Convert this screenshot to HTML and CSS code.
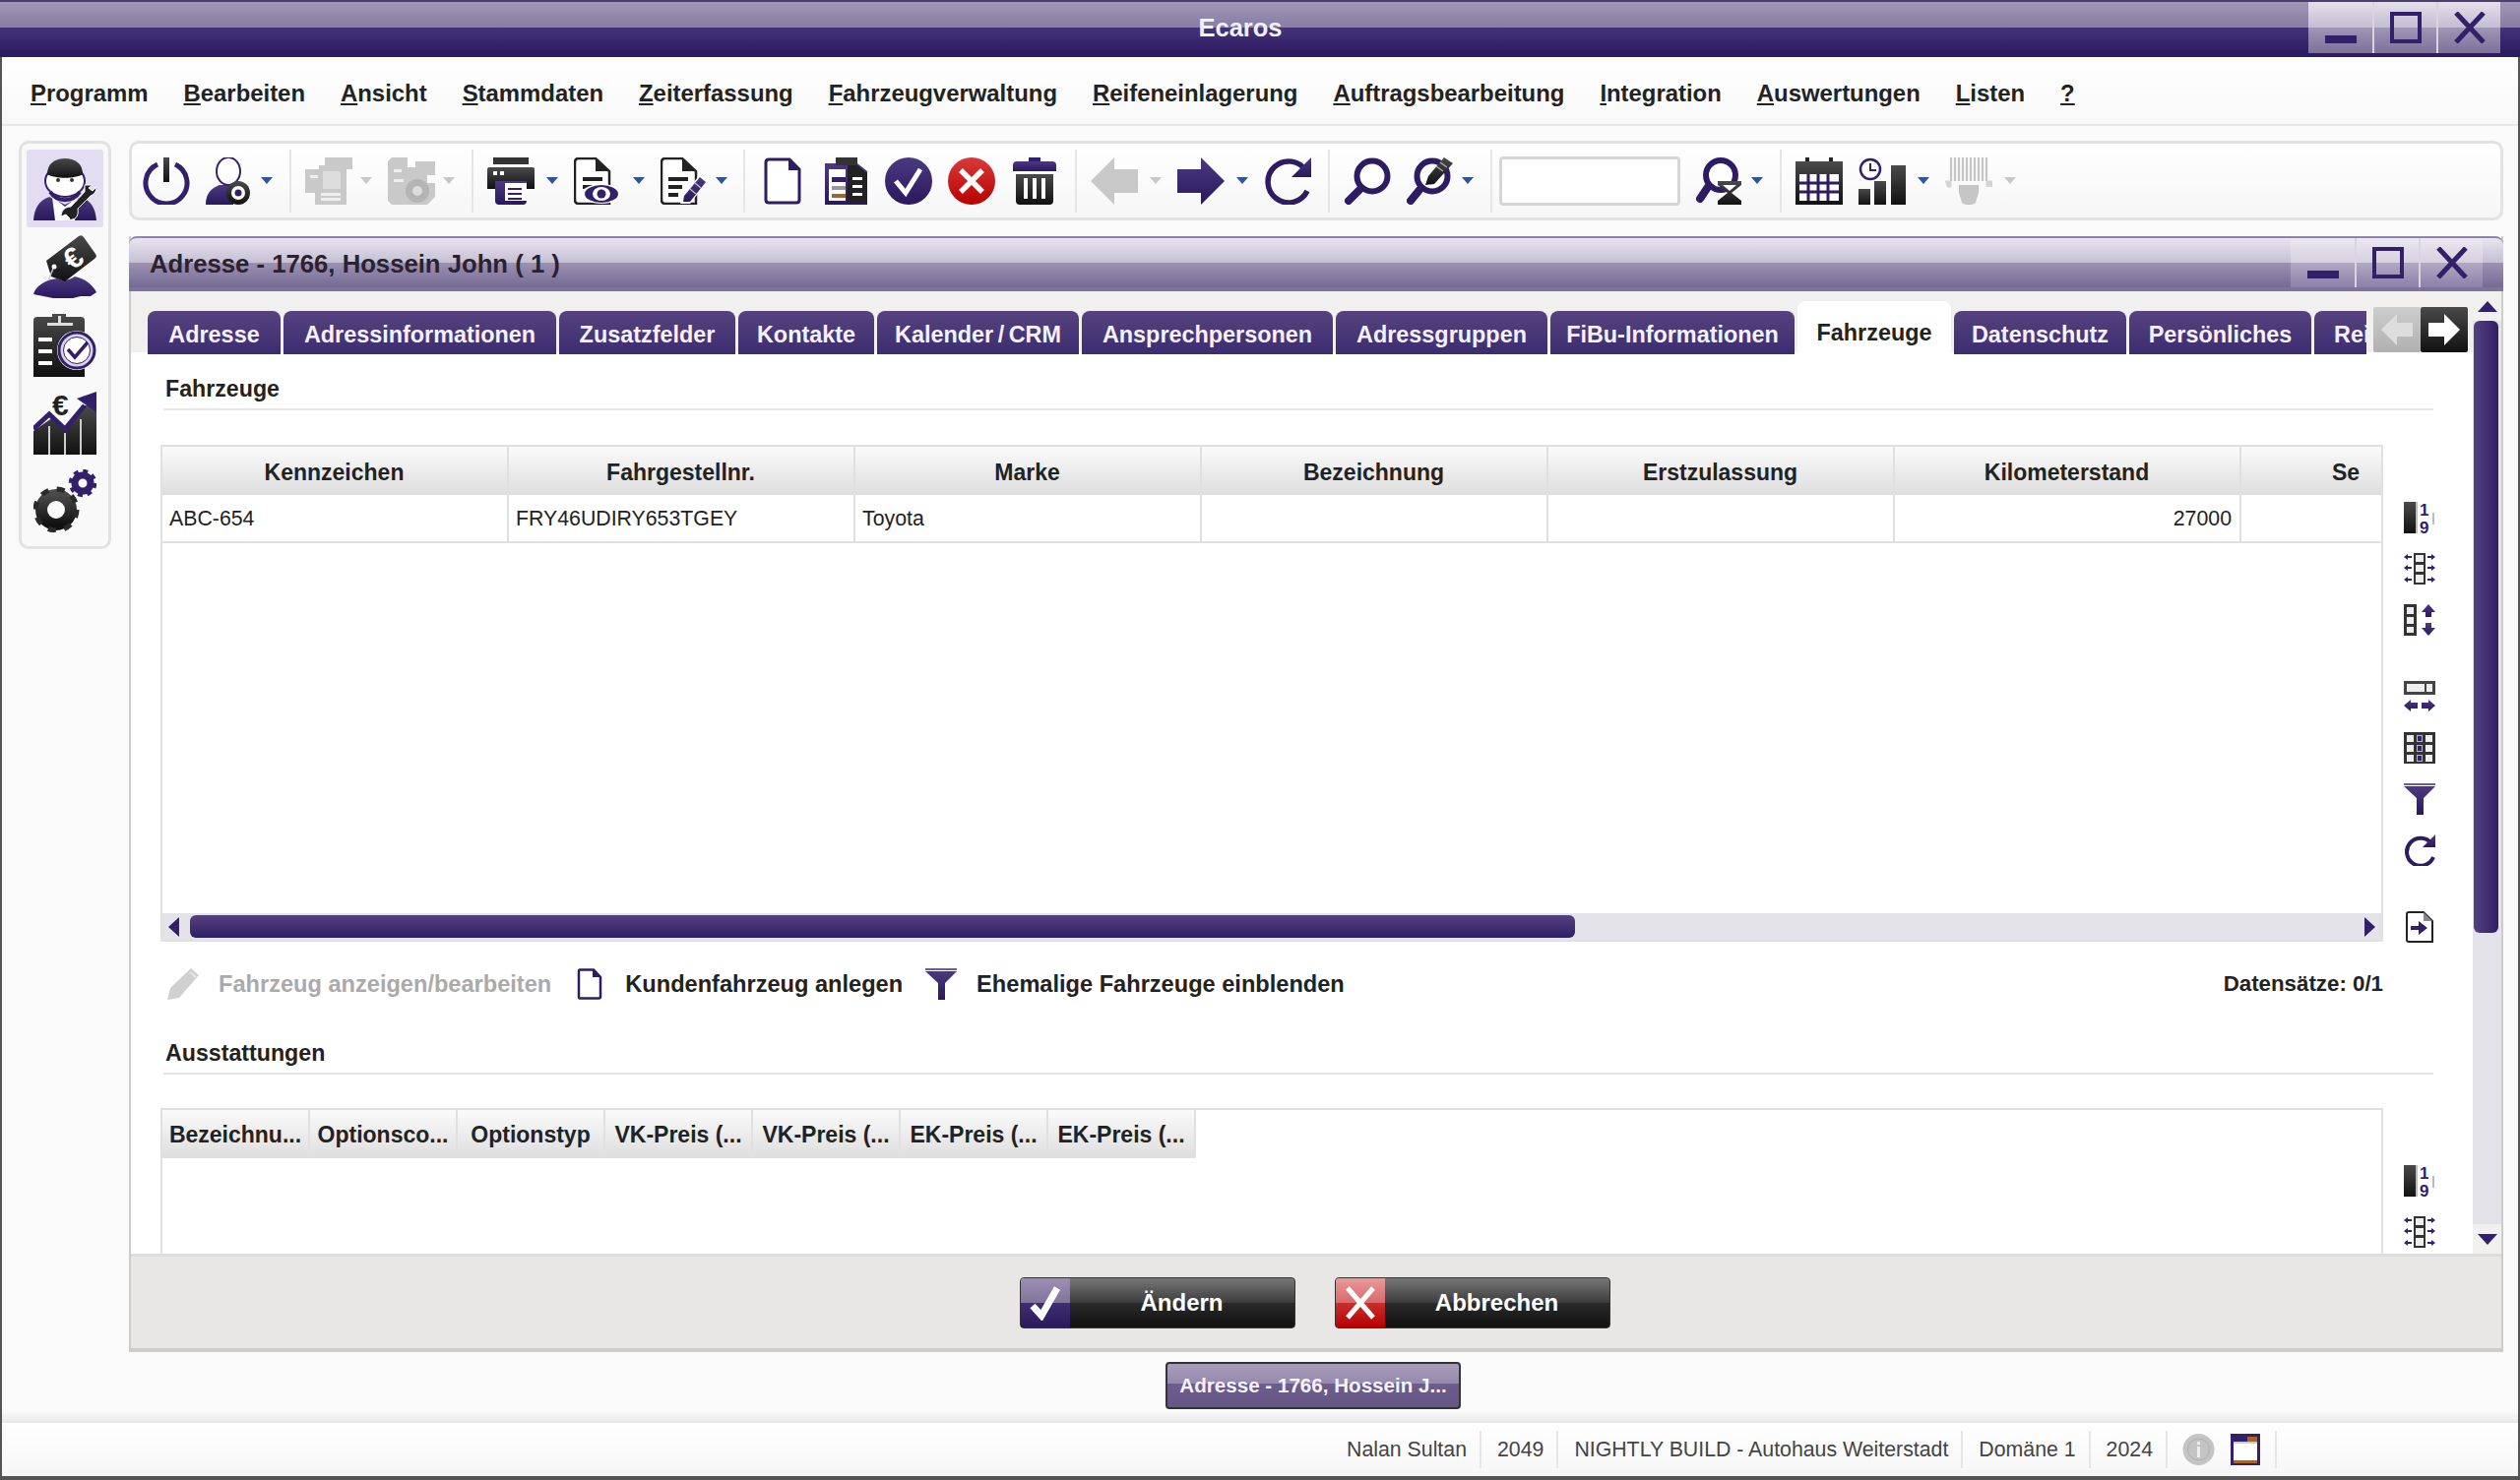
FILE: index.html
```html
<!DOCTYPE html>
<html lang="de">

<head>
    <meta charset="UTF-8">
    <title>Ecaros</title>
    <link rel="stylesheet" href="styles.css">
</head>

<body>
    <svg class="sprite" xmlns="http://www.w3.org/2000/svg">
        <defs>
            <linearGradient id="pur" x1="0" y1="0" x2="0" y2="1"><stop offset="0" stop-color="#4b3a82"/><stop offset="1" stop-color="#2a185c"/></linearGradient>
            <linearGradient id="drk" x1="0" y1="0" x2="0" y2="1"><stop offset="0" stop-color="#4a4a4a"/><stop offset="1" stop-color="#111"/></linearGradient>
            <linearGradient id="red" x1="0" y1="0" x2="0" y2="1"><stop offset="0" stop-color="#d83a3a"/><stop offset="1" stop-color="#b80000"/></linearGradient>

            <symbol id="i-power" viewBox="0 0 48 48"><path d="M15 7A21 21 0 1 0 33 7" fill="none" stroke="#33206a" stroke-width="5"/><rect x="21" y="0" width="6" height="25" fill="url(#drk)"/></symbol>
            <symbol id="i-user-q" viewBox="0 0 48 48"><path d="M0 48C0 36 6 31 14 28H28V48Z" fill="url(#pur)"/><ellipse cx="23" cy="14" rx="12" ry="14" fill="#fff" stroke="#33206a" stroke-width="2"/><circle cx="33" cy="36" r="12" fill="url(#drk)"/><circle cx="33" cy="36" r="7" fill="#fff"/><circle cx="33" cy="36" r="3.5" fill="#33206a"/></symbol>
            <symbol id="i-copy-list" viewBox="0 0 48 48"><path d="M0 12H14V8H20V0H48V12H42V48H10V36H0Z" fill="#c9c9c9"/><rect x="18" y="14" width="18" height="18" fill="#dcdcdc"/><rect x="16" y="36" width="20" height="3" fill="#eee"/><rect x="16" y="41" width="20" height="3" fill="#eee"/><rect x="5" y="18" width="8" height="3" fill="#eee"/></symbol>
            <symbol id="i-copy-eye" viewBox="0 0 48 48"><path d="M0 4L4 0H20V10H28V4H48V18H40V26H48V40L40 48H4L0 44Z" fill="#c9c9c9"/><circle cx="30" cy="34" r="12" fill="#b4b4b4"/><circle cx="30" cy="34" r="5" fill="#dcdcdc"/><rect x="6" y="22" width="10" height="3" fill="#eee"/><rect x="6" y="12" width="8" height="3" fill="#eee"/></symbol>
            <symbol id="i-print" viewBox="0 0 48 48"><rect x="6" y="0" width="36" height="7" fill="#333"/><path d="M2 10H46Q48 10 48 12V32H0V12Q0 10 2 10Z" fill="url(#drk)"/><rect x="6" y="14" width="4" height="4" fill="#fff"/><rect x="13" y="14" width="4" height="4" fill="#fff"/><path d="M8 24H40V44Q40 48 36 48H12Q8 48 8 44Z" fill="url(#pur)"/><path d="M18 26H40V44H18Z" fill="#fff"/><rect x="21" y="31" width="14" height="2" fill="#33206a"/><rect x="21" y="36" width="14" height="2" fill="#33206a"/><rect x="21" y="41" width="14" height="2" fill="#33206a"/></symbol>
            <symbol id="i-doc-eye" viewBox="0 0 48 48"><path d="M5 1H22L36 14V47H5Q1 47 1 43V5Q1 1 5 1Z" fill="#fff" stroke="#222" stroke-width="2.5"/><path d="M22 1V14H36Z" fill="#222"/><rect x="9" y="20" width="20" height="4" fill="#222"/><rect x="9" y="28" width="20" height="4" fill="#222"/><ellipse cx="28" cy="37" rx="20" ry="10" fill="#fff"/><ellipse cx="28" cy="37" rx="17" ry="9" fill="#33206a"/><ellipse cx="28" cy="37" rx="9" ry="7" fill="#fff"/><circle cx="28" cy="37" r="4.5" fill="#33206a"/></symbol>
            <symbol id="i-doc-pen" viewBox="0 0 48 48"><path d="M5 1H22L36 14V47H5Q1 47 1 43V5Q1 1 5 1Z" fill="#fff" stroke="#222" stroke-width="2.5"/><path d="M22 1V14H36Z" fill="#222"/><rect x="8" y="20" width="20" height="4" fill="#222"/><rect x="8" y="28" width="14" height="4" fill="#222"/><rect x="8" y="36" width="10" height="4" fill="#222"/><path d="M40 18L48 24L30 47H20L22 38Z" fill="#fff"/><path d="M40 20L46 25L30 45L23 45L24 39Z" fill="url(#pur)"/><path d="M30 32L36 37M35 26L41 31" stroke="#bbb" stroke-width="1.5"/></symbol>
            <symbol id="i-doc-new" viewBox="0 0 48 48"><path d="M10 2H31L41 12V43Q41 46 38 46H10Q7 46 7 43V5Q7 2 10 2Z" fill="#fff" stroke="#2e1c63" stroke-width="3"/><path d="M30 2V13H41Z" fill="#2e1c63"/></symbol>
            <symbol id="i-doc-list" viewBox="0 0 48 48"><path d="M3 6H36L46 14V48H3Z" fill="url(#pur)"/><rect x="14" y="0" width="22" height="8" fill="#333"/><path d="M26 8H36L46 16V46H26Z" fill="#222"/><path d="M7 12H24V44H7Z" fill="#fff"/><rect x="10" y="20" width="14" height="5" fill="#33206a"/><rect x="10" y="29" width="14" height="4" fill="#999"/><rect x="10" y="37" width="14" height="4" fill="#a5642a"/><rect x="31" y="20" width="10" height="3" fill="#fff"/><rect x="31" y="28" width="10" height="3" fill="#fff"/><rect x="31" y="36" width="10" height="3" fill="#fff"/></symbol>
            <symbol id="i-check" viewBox="0 0 48 48"><circle cx="24" cy="24" r="24" fill="url(#pur)"/><path d="M11 24L21 36L36 12" fill="none" stroke="#fff" stroke-width="5"/></symbol>
            <symbol id="i-cancel" viewBox="0 0 48 48"><circle cx="24" cy="24" r="24" fill="url(#red)"/><path d="M13 13L35 35M35 13L13 35" fill="none" stroke="#fff" stroke-width="5.5"/></symbol>
            <symbol id="i-trash" viewBox="0 0 48 48"><rect x="18" y="0" width="12" height="6" fill="#33206a"/><path d="M6 4H42Q46 4 46 8V14H2V8Q2 4 6 4Z" fill="url(#pur)"/><path d="M5 17H43V44Q43 48 39 48H9Q5 48 5 44Z" fill="url(#drk)"/><rect x="13" y="21" width="4" height="21" fill="#fff"/><rect x="22" y="21" width="4" height="21" fill="#fff"/><rect x="31" y="21" width="4" height="21" fill="#fff"/></symbol>
            <symbol id="i-back" viewBox="0 0 48 48"><path d="M48 12H24V0L0 24L24 48V36H48Z" fill="#c8c8c8"/></symbol>
            <symbol id="i-forward" viewBox="0 0 48 48"><path d="M0 12H24V0L48 24L24 48V36H0Z" fill="url(#pur)"/></symbol>
            <symbol id="i-refresh" viewBox="0 0 48 48"><path d="M43 14A21 21 0 1 0 44 34" fill="none" stroke="#2e1c63" stroke-width="5.5"/><path d="M48 0V20H28Z" fill="url(#pur)"/></symbol>
            <symbol id="i-search" viewBox="0 0 48 48"><circle cx="29" cy="19" r="15.5" fill="#fff" stroke="#2e1c63" stroke-width="6"/><path d="M16 33L5 44" stroke="#2e1c63" stroke-width="8" stroke-linecap="round"/></symbol>
            <symbol id="i-search-tool" viewBox="0 0 48 48"><circle cx="26" cy="19" r="15.5" fill="#fff" stroke="#2e1c63" stroke-width="6"/><path d="M13 33L4 44" stroke="#2e1c63" stroke-width="8" stroke-linecap="round"/><path d="M38 0L47 6L28 27L19 28L22 19Z" fill="url(#drk)"/><path d="M30 9L37 14M34 5L41 10" stroke="#aaa" stroke-width="1.5"/></symbol>
            <symbol id="i-search-hour" viewBox="0 0 48 48"><circle cx="25" cy="18" r="15" fill="#fff" stroke="#2e1c63" stroke-width="6"/><path d="M12 30L4 42" stroke="#2e1c63" stroke-width="8" stroke-linecap="round"/><path d="M22 24H46V28L36 36L46 44V48H22V44L32 36L22 28Z" fill="url(#drk)"/><path d="M27 28H41L34 34Z" fill="#fff"/></symbol>
            <symbol id="i-calendar" viewBox="0 0 48 48"><rect x="10" y="0" width="4" height="7" fill="#222"/><rect x="34" y="0" width="4" height="7" fill="#222"/><rect x="0" y="4" width="48" height="44" fill="url(#drk)"/><path d="M4 17H44V44H4Z" fill="#fff"/><path d="M4 26H44M4 35H44M13 17V44M23 17V44M33 17V44" stroke="#2e1c63" stroke-width="3"/></symbol>
            <symbol id="i-chart" viewBox="0 0 48 48"><rect x="0" y="32" width="12" height="16" fill="url(#drk)"/><rect x="16" y="24" width="12" height="24" fill="url(#drk)"/><rect x="33" y="8" width="15" height="40" fill="url(#drk)"/><circle cx="12" cy="12" r="10" fill="#fff" stroke="#33206a" stroke-width="2.5"/><path d="M12 6V13H18" fill="none" stroke="#33206a" stroke-width="2"/></symbol>
            <symbol id="i-barcode" viewBox="0 0 48 48"><path d="M6 0V24M10 0V24M14 0V24M18 0V24M22 0V24M26 0V24M30 0V24M34 0V24M38 0V24M42 0V24" stroke="#c4c4c4" stroke-width="2.2"/><path d="M0 24H6V30H2M42 30V24H48V30" stroke="#d4d4d4" fill="#d4d4d4"/><path d="M14 28H34V36L31 46Q29 48 24 48Q19 48 17 46L14 36Z" fill="#c6c6c6"/></symbol>

            <symbol id="s-sort-num" viewBox="0 0 32 32"><rect x="0" y="0" width="12" height="32" fill="url(#drk)"/><rect x="12" y="0" width="2" height="32" fill="#bbb"/><text class="mini" x="16" y="14">1</text><text class="mini" x="16" y="32">9</text><rect x="29" y="11" width="2" height="12" fill="#bbb"/></symbol>
            <symbol id="s-col-fit" viewBox="0 0 32 32"><rect x="10" y="0" width="12" height="32" fill="#333"/><rect x="12" y="2" width="8" height="7" fill="#eee"/><rect x="12" y="12" width="8" height="7" fill="#eee"/><rect x="12" y="22" width="8" height="8" fill="#eee"/><g fill="#33206a"><path d="M0 4L4 1V7ZM4 3H8V5H4Z"/><path d="M0 15L4 12V18ZM4 14H8V16H4Z"/><path d="M0 27L4 24V30ZM4 26H8V28H4Z"/><path d="M32 4L28 1V7ZM24 3H28V5H24Z"/><path d="M32 15L28 12V18ZM24 14H28V16H24Z"/><path d="M32 27L28 24V30ZM24 26H28V28H24Z"/></g></symbol>
            <symbol id="s-col-move" viewBox="0 0 32 32"><rect x="0" y="0" width="13" height="32" fill="#333"/><rect x="3" y="3" width="7" height="7" fill="#eee"/><rect x="3" y="13" width="7" height="7" fill="#eee"/><rect x="3" y="23" width="7" height="6" fill="#eee"/><path d="M25 0L32 8H28V13H22V8H18Z" fill="url(#pur)"/><path d="M25 32L18 24H22V19H28V24H32Z" fill="url(#pur)"/></symbol>
            <symbol id="s-row-fit" viewBox="0 0 32 32"><rect x="0" y="0" width="32" height="14" fill="#444"/><rect x="3" y="3" width="18" height="8" fill="#eee"/><rect x="23" y="3" width="6" height="8" fill="#eee"/><path d="M0 25L7 19V22H14V28H7V31Z" fill="url(#pur)"/><path d="M32 25L25 19V22H18V28H25V31Z" fill="url(#pur)"/></symbol>
            <symbol id="s-grid" viewBox="0 0 32 32"><rect x="0" y="0" width="32" height="32" fill="#333"/><path d="M3 3H10V10H3ZM3 13H10V20H3ZM3 23H10V30H3ZM22 3H29V10H22ZM22 13H29V20H22ZM22 23H29V30H22Z" fill="#eee"/><path d="M13 3H19V10H13ZM13 13H19V20H13ZM13 23H19V30H13Z" fill="#b9b4c8"/><path d="M14 4H18V9H14ZM14 14H18V19H14ZM14 24H18V29H14Z" fill="#33206a"/></symbol>
            <symbol id="s-filter" viewBox="0 0 32 32"><rect x="0" y="0" width="32" height="2" fill="#6a5a98"/><path d="M0 3H32L20 15V32H13V15Z" fill="url(#pur)"/></symbol>
            <symbol id="s-reload" viewBox="0 0 32 32"><path d="M28 9A14 14 0 1 0 30 23" fill="none" stroke="#2e1c63" stroke-width="4"/><path d="M32 0V13H19Z" fill="url(#pur)"/></symbol>
            <symbol id="s-export" viewBox="0 0 32 32"><path d="M5 1H20L29 10V31H5Q3 31 3 29V3Q3 1 5 1Z" fill="#fff" stroke="#222" stroke-width="2"/><path d="M20 1V10H29Z" fill="#888"/><path d="M7 15H15V10L24 17L15 24V19H7Z" fill="#33206a"/></symbol>
            <symbol id="s-pencil" viewBox="0 0 32 32"><path d="M24 0L32 7L12 30L0 32L3 20Z" fill="#d0d0d0"/><path d="M23 4L29 9" stroke="#eee" stroke-width="1.5"/></symbol>
            <symbol id="s-doc" viewBox="0 0 32 32"><path d="M6 1.5H20L27 9V29Q27 30.5 25 30.5H6Q5 30.5 5 29V3Q5 1.5 6 1.5Z" fill="#fff" stroke="#2e1c63" stroke-width="2.5"/><path d="M19 1V9H27Z" fill="#2e1c63"/></symbol>

            <symbol id="b-mech" viewBox="0 0 64 64"><path d="M0 64C1 52 5 44 16 40L32 48L48 40C59 44 63 52 64 64Z" fill="url(#pur)"/><path d="M19 40L32 50L45 40L42 64H22Z" fill="#fff"/><ellipse cx="32" cy="24" rx="20" ry="16" fill="#fff" stroke="#33206a" stroke-width="2"/><path d="M14 17C14 6 22 1 32 1S50 6 50 17C42 22 22 22 14 17Z" fill="url(#drk)"/><circle cx="25" cy="23" r="2" fill="#333"/><circle cx="39" cy="23" r="2" fill="#333"/><path d="M17 35C24 46 40 46 47 35" fill="none" stroke="#33206a" stroke-width="4"/><path d="M60 28L52 28L52 35L38 50C32 50 28 54 28 60L33 58L37 62C34 64 42 64 44 60C46 56 45 54 45 52L58 39C60 38 64 36 64 30L60 34L56 31Z" fill="#222" stroke="#fff" stroke-width="1"/></symbol>
            <symbol id="b-tag" viewBox="0 0 64 64"><path d="M0 60C2 52 12 45 24 44C30 47 36 46 42 42C52 44 60 50 64 58L58 62H48L40 64H20L10 62Z" fill="url(#pur)"/><path d="M46 1Q49 -1 51 2L63 19Q65 22 62 24L32 47L18 42L13 26Z" fill="url(#drk)"/><circle cx="21" cy="32" r="2.5" fill="#fff"/><path d="M20 34L15 46" stroke="#ccc" stroke-width="1.5" fill="none"/><text class="euro" x="32" y="33" transform="rotate(-38 41 23)">€</text></symbol>
            <symbol id="b-clip" viewBox="0 0 64 64"><path d="M4 3H19V0H33V3H48Q52 3 52 7V64H0V7Q0 3 4 3Z" fill="url(#drk)"/><rect x="14" y="9" width="26" height="3" fill="#ddd"/><rect x="25" y="2" width="3" height="8" fill="#ddd"/><rect x="5" y="24" width="14" height="4" fill="#fff"/><rect x="5" y="36" width="14" height="4" fill="#fff"/><rect x="5" y="48" width="14" height="4" fill="#fff"/><circle cx="44" cy="37" r="20" fill="#fff"/><circle cx="44" cy="37" r="18" fill="#d8d4e4" stroke="#33206a" stroke-width="3"/><circle cx="44" cy="37" r="13.5" fill="#fff" stroke="#33206a" stroke-width="1"/><path d="M35 36L42 44L55 29" fill="none" stroke="#33206a" stroke-width="3.5"/></symbol>
            <symbol id="b-chart" viewBox="0 0 64 64"><path d="M0 40L20 26L32 38L54 14V64H0Z" fill="url(#drk)"/><path d="M64 14V64H52V14Z" fill="url(#drk)"/><path d="M16 35V64M32 42V64M48 28V64" stroke="#ccc" stroke-width="2"/><path d="M0 38L16 23L32 38L52 14" fill="none" stroke="#33206a" stroke-width="5"/><path d="M44 7L64 0V21Z" fill="#33206a"/><text class="euro-dark" x="19" y="24">€</text></symbol>
            <symbol id="b-gears" viewBox="0 0 64 64"><circle cx="23" cy="41" r="15" fill="none" stroke="url(#drk)" stroke-width="12"/><circle cx="23" cy="41" r="21" fill="none" stroke="#2a2a2a" stroke-width="5" stroke-dasharray="8 8.5"/><circle cx="50" cy="14" r="8" fill="none" stroke="#33206a" stroke-width="7"/><circle cx="50" cy="14" r="12.5" fill="none" stroke="#33206a" stroke-width="3.5" stroke-dasharray="5 4.8"/></symbol>
        </defs>
    </svg>

    <div class="app">
        <header class="titlebar">
            <span class="title-text">Ecaros</span>
            <div class="win-ctrl">
                <span class="ctrl"><span class="ctrl-min"></span></span>
                <span class="ctrl"><span class="ctrl-max"></span></span>
                <span class="ctrl"><svg class="ctrl-x" viewBox="0 0 32 32"><path d="M2 1L30 31M30 1L2 31" stroke="#33206a" stroke-width="5"/></svg></span>
            </div>
        </header>

        <nav class="menubar">
            <span><u>P</u>rogramm</span>
            <span><u>B</u>earbeiten</span>
            <span><u>A</u>nsicht</span>
            <span><u>S</u>tammdaten</span>
            <span><u>Z</u>eiterfassung</span>
            <span><u>F</u>ahrzeugverwaltung</span>
            <span><u>R</u>eifeneinlagerung</span>
            <span><u>A</u>uftragsbearbeitung</span>
            <span><u>I</u>ntegration</span>
            <span><u>A</u>uswertungen</span>
            <span><u>L</u>isten</span>
            <span><u>?</u></span>
        </nav>

        <div class="body">
            <aside class="sidebar">
                <div class="side-item active"><svg class="ic64"><use href="#b-mech"/></svg></div>
                <div class="side-item"><svg class="ic64"><use href="#b-tag"/></svg></div>
                <div class="side-item"><svg class="ic64"><use href="#b-clip"/></svg></div>
                <div class="side-item"><svg class="ic64"><use href="#b-chart"/></svg></div>
                <div class="side-item"><svg class="ic64"><use href="#b-gears"/></svg></div>
            </aside>

            <main class="main">
                <div class="toolbar">
                    <svg class="ic48"><use href="#i-power"/></svg>
                    <svg class="ic48 next"><use href="#i-user-q"/></svg><span class="caret"></span>
                    <span class="sep sep-a"></span>
                    <svg class="ic48"><use href="#i-copy-list"/></svg><span class="caret off"></span>
                    <svg class="ic48 next"><use href="#i-copy-eye"/></svg><span class="caret off"></span>
                    <span class="sep"></span>
                    <svg class="ic48"><use href="#i-print"/></svg><span class="caret far"></span>
                    <svg class="ic48 next"><use href="#i-doc-eye"/></svg><span class="caret far"></span>
                    <svg class="ic48 next"><use href="#i-doc-pen"/></svg><span class="caret"></span>
                    <span class="sep sep-b"></span>
                    <svg class="ic48"><use href="#i-doc-new"/></svg>
                    <svg class="ic48 next"><use href="#i-doc-list"/></svg>
                    <svg class="ic48 next"><use href="#i-check"/></svg>
                    <svg class="ic48 next"><use href="#i-cancel"/></svg>
                    <svg class="ic48 next"><use href="#i-trash"/></svg>
                    <span class="sep"></span>
                    <svg class="ic48"><use href="#i-back"/></svg><span class="caret off far"></span>
                    <svg class="ic48 next"><use href="#i-forward"/></svg><span class="caret far"></span>
                    <svg class="ic48 next"><use href="#i-refresh"/></svg>
                    <span class="sep"></span>
                    <svg class="ic48"><use href="#i-search"/></svg>
                    <svg class="ic48 next"><use href="#i-search-tool"/></svg><span class="caret"></span>
                    <span class="sep sep-c"></span>
                    <input class="tool-input" type="text">
                    <svg class="ic48 next"><use href="#i-search-hour"/></svg><span class="caret"></span>
                    <span class="sep"></span>
                    <svg class="ic48"><use href="#i-calendar"/></svg>
                    <svg class="ic48 next"><use href="#i-chart"/></svg><span class="caret far"></span>
                    <svg class="ic48 next"><use href="#i-barcode"/></svg><span class="caret off far"></span>
                </div>

                <section class="window">
                    <header class="win-title">
                        <span class="win-title-text">Adresse - 1766, Hossein John ( 1 )</span>
                        <div class="win-ctrl">
                            <span class="ctrl"><span class="ctrl-min"></span></span>
                            <span class="ctrl"><span class="ctrl-max"></span></span>
                            <span class="ctrl"><svg class="ctrl-x" viewBox="0 0 32 32"><path d="M2 1L30 31M30 1L2 31" stroke="#33206a" stroke-width="5"/></svg></span>
                        </div>
                    </header>

                    <div class="win-body">
                        <div class="win-left">
                            <div class="tabs">
                                <div class="tab-list">
                                    <span class="tab">Adresse</span>
                                    <span class="tab">Adressinformationen</span>
                                    <span class="tab">Zusatzfelder</span>
                                    <span class="tab">Kontakte</span>
                                    <span class="tab">Kalender / CRM</span>
                                    <span class="tab">Ansprechpersonen</span>
                                    <span class="tab">Adressgruppen</span>
                                    <span class="tab">FiBu-Informationen</span>
                                    <span class="tab active">Fahrzeuge</span>
                                    <span class="tab">Datenschutz</span>
                                    <span class="tab">Persönliches</span>
                                    <span class="tab last">Rei</span>
                                </div>
                                <span class="tab-nav off"><svg class="nav-ic" viewBox="0 0 32 32"><path d="M32 9H16V0L0 16L16 32V23H32Z" fill="#ddd"/></svg></span>
                                <span class="tab-nav"><svg class="nav-ic" viewBox="0 0 32 32"><path d="M0 9H16V0L32 16L16 32V23H0Z" fill="#fff"/></svg></span>
                            </div>

                            <div class="pane">
                                <h2 class="section-head">Fahrzeuge</h2>
                                <div class="grid-row">
                                    <div class="grid big">
                                        <div class="grid-head">
                                            <span class="cell">Kennzeichen</span>
                                            <span class="cell">Fahrgestellnr.</span>
                                            <span class="cell">Marke</span>
                                            <span class="cell">Bezeichnung</span>
                                            <span class="cell">Erstzulassung</span>
                                            <span class="cell">Kilometerstand</span>
                                            <span class="cell cut">Se</span>
                                        </div>
                                        <div class="grid-line">
                                            <span class="cell">ABC-654</span>
                                            <span class="cell">FRY46UDIRY653TGEY</span>
                                            <span class="cell">Toyota</span>
                                            <span class="cell"></span>
                                            <span class="cell"></span>
                                            <span class="cell num">27000</span>
                                            <span class="cell"></span>
                                        </div>
                                        <div class="grid-empty"></div>
                                        <div class="hscroll">
                                            <span class="arrow-l"></span>
                                            <span class="hthumb"></span>
                                            <span class="arrow-r"></span>
                                        </div>
                                    </div>
                                    <div class="grid-tools">
                                        <svg class="ic32"><use href="#s-sort-num"/></svg>
                                        <svg class="ic32"><use href="#s-col-fit"/></svg>
                                        <svg class="ic32"><use href="#s-col-move"/></svg>
                                        <svg class="ic32 group"><use href="#s-row-fit"/></svg>
                                        <svg class="ic32"><use href="#s-grid"/></svg>
                                        <svg class="ic32"><use href="#s-filter"/></svg>
                                        <svg class="ic32"><use href="#s-reload"/></svg>
                                        <svg class="ic32 group"><use href="#s-export"/></svg>
                                    </div>
                                </div>

                                <div class="actions">
                                    <span class="action off"><svg class="ic32"><use href="#s-pencil"/></svg>Fahrzeug anzeigen/bearbeiten</span>
                                    <span class="action"><svg class="ic32"><use href="#s-doc"/></svg>Kundenfahrzeug anlegen</span>
                                    <span class="action"><svg class="ic32"><use href="#s-filter"/></svg>Ehemalige Fahrzeuge einblenden</span>
                                    <span class="count">Datensätze: 0/1</span>
                                </div>

                                <h2 class="section-head second">Ausstattungen</h2>
                                <div class="grid-row">
                                    <div class="grid small">
                                        <div class="grid-head">
                                            <span class="cell">Bezeichnu...</span>
                                            <span class="cell">Optionsco...</span>
                                            <span class="cell">Optionstyp</span>
                                            <span class="cell">VK-Preis (...</span>
                                            <span class="cell">VK-Preis (...</span>
                                            <span class="cell">EK-Preis (...</span>
                                            <span class="cell">EK-Preis (...</span>
                                        </div>
                                    </div>
                                    <div class="grid-tools">
                                        <svg class="ic32"><use href="#s-sort-num"/></svg>
                                        <svg class="ic32"><use href="#s-col-fit"/></svg>
                                    </div>
                                </div>
                            </div>
                        </div>

                        <div class="vscroll">
                            <span class="v-end"><span class="arrow-u"></span></span>
                            <span class="vtrack"><span class="vthumb"></span></span>
                            <span class="v-end"><span class="arrow-d"></span></span>
                        </div>
                    </div>

                    <footer class="win-foot">
                        <button class="btn" type="button">
                            <span class="btn-ic ok"><svg class="btn-svg" viewBox="0 0 32 36"><path d="M3 21L12 31L28 3" fill="none" stroke="#fff" stroke-width="7"/></svg></span>
                            <span class="btn-label">Ändern</span>
                        </button>
                        <button class="btn" type="button">
                            <span class="btn-ic no"><svg class="btn-svg" viewBox="0 0 32 36"><path d="M3 3L29 33M29 3L3 33" fill="none" stroke="#fff" stroke-width="5"/></svg></span>
                            <span class="btn-label">Abbrechen</span>
                        </button>
                    </footer>
                </section>

                <div class="taskbar">
                    <button class="task" type="button">Adresse - 1766, Hossein J...</button>
                </div>
            </main>
        </div>

        <footer class="status">
            <span class="st">Nalan Sultan</span>
            <span class="st">2049</span>
            <span class="st">NIGHTLY BUILD - Autohaus Weiterstadt</span>
            <span class="st">Domäne 1</span>
            <span class="st">2024</span>
            <span class="st st-ic">
                <svg class="st-info" viewBox="0 0 32 32"><circle cx="16" cy="16" r="16" fill="#c4c4c4"/><circle cx="16" cy="16" r="11" fill="none" stroke="#b0b0b0" stroke-width="1"/><rect x="14.5" y="13" width="3" height="11" fill="#eee"/><rect x="14.5" y="8" width="3" height="3" fill="#eee"/></svg>
                <svg class="st-win" viewBox="0 0 30 32"><rect width="30" height="32" fill="#33206a"/><rect x="3" y="10" width="24" height="19" fill="#fff"/><rect x="3" y="8" width="24" height="2" fill="#ccc"/><rect x="3" y="27" width="24" height="3" fill="#a5642a"/><rect x="17" y="3" width="10" height="5" fill="#a5642a"/></svg>
            </span>
        </footer>
    </div>
</body>

</html>
```

FILE: styles.css
```css
* {
    margin: 0;
    padding: 0;
    box-sizing: border-box;
}

body {
    font-family: "Liberation Sans", Arial, sans-serif;
    overflow: hidden;
}

.sprite {
    display: block;
    width: 0;
    height: 0;
}

.mini {
    font: bold 17px "Liberation Sans", sans-serif;
    fill: #33206a;
}

.euro {
    font: bold 30px "Liberation Sans", sans-serif;
    fill: #fff;
}

.euro-dark {
    font: bold 30px "Liberation Sans", sans-serif;
    fill: #222;
}

.app {
    width: 2560px;
    height: 1504px;
    display: flex;
    flex-direction: column;
    border-left: 2px solid #555;
    border-right: 2px solid #555;
    border-bottom: 4px solid #555;
    background-color: #fafafa;
}

/* title bar */
.titlebar {
    height: 58px;
    margin: 0 -2px;
    flex: none;
    display: flex;
    justify-content: center;
    align-items: center;
    position: relative;
    border-top: 2px solid #4b3f70;
    border-bottom: 4px solid #2e1c63;
    background: linear-gradient(#a097b8, #877ca2 50%, #43347a 50%, #2d1b60);
    padding-right: 40px;
}

.title-text {
    color: #f2f0f6;
    font-size: 25.5px;
    font-weight: bold;
}

.win-ctrl {
    display: flex;
    position: absolute;
    top: 0;
    bottom: 0;
}

.titlebar .win-ctrl {
    right: 20px;
}

.ctrl {
    width: 65px;
    display: flex;
    justify-content: center;
    align-items: center;
    border-left: 2px solid #d8d4e2;
    background: linear-gradient(#e3e0ea, #c3bdd1 50%, #a096b6 50%, #7d7199);
}

.ctrl:first-child {
    border-left: none;
}

.ctrl-min {
    width: 32px;
    height: 8px;
    margin-top: 24px;
    background-color: #33206a;
}

.ctrl-max {
    width: 32px;
    height: 32px;
    border: 4px solid #33206a;
}

.ctrl-x {
    width: 32px;
    height: 32px;
}

/* menu */
.menubar {
    height: 70px;
    flex: none;
    display: flex;
    align-items: center;
    gap: 36px;
    padding: 6px 0 0 29px;
    font-size: 23.9px;
    font-weight: bold;
    color: #222;
    background: linear-gradient(#fff, #f8f8f8);
    border-bottom: 2px solid #e8e8e8;
}

/* body */
.body {
    flex: 1;
    min-height: 0;
    display: flex;
    padding: 15px 15px 0 17px;
    gap: 18px;
}

.sidebar {
    width: 94px;
    height: 415px;
    flex: none;
    padding: 6px 5px;
    display: flex;
    flex-direction: column;
    border: 3px solid #e2e2e2;
    border-radius: 10px;
    background-color: #f9f9f9;
}

.side-item {
    height: 80px;
    display: flex;
    justify-content: center;
    align-items: center;
}

.side-item.active {
    background-color: #e2ddf0;
    border-radius: 3px;
}

.ic64 {
    width: 64px;
    height: 64px;
}

.ic48 {
    width: 48px;
    height: 48px;
    flex: none;
}

.ic32 {
    width: 32px;
    height: 32px;
    flex: none;
}

.main {
    flex: 1;
    min-width: 0;
    display: flex;
    flex-direction: column;
}

/* toolbar */
.toolbar {
    height: 81px;
    flex: none;
    display: flex;
    align-items: center;
    padding-left: 11px;
    border: 3px solid #e2e2e2;
    border-radius: 10px;
    background: linear-gradient(#fff, #f6f6f6);
}

.toolbar .next {
    margin-left: 16px;
}

.caret {
    width: 0;
    height: 0;
    margin-left: 8px;
    border-left: 6px solid transparent;
    border-right: 6px solid transparent;
    border-top: 7px solid #2f5597;
}

.caret.off {
    border-top-color: #c8c8c8;
}

.caret.far {
    margin-left: 12px;
}

.sep {
    width: 2px;
    height: 64px;
    margin: 0 14px 0 17px;
    background-color: #e6e6e6;
}

.sep-b {
    margin: 0 0 0 16px;
}

.sep-b + .ic48 {
    margin-left: 14px;
}

.sep-c {
    margin: 0 7px 0 17px;
}

.tool-input {
    width: 184px;
    height: 50px;
    border: 3px solid #d6d6d6;
    border-radius: 4px;
    background-color: #fff;
}

/* inner window */
.window {
    flex: 1;
    min-height: 0;
    margin-top: 16px;
    display: flex;
    flex-direction: column;
    border-left: 2px solid #ccc;
    border-right: 2px solid #ccc;
}

.win-title {
    height: 56px;
    flex: none;
    display: flex;
    align-items: center;
    padding: 2px 0 0 21px;
    position: relative;
    margin: 0 -2px;
    border-top: 2px solid #8f83ab;
    border-bottom: 4px solid #7f7499;
    border-radius: 8px 8px 0 0;
    background: linear-gradient(#e8e5f0, #c5bfd3 50%, #9d92b2 50%, #756a95);
}

.win-title-text {
    font-size: 25.7px;
    font-weight: bold;
    color: #2a2230;
}

.win-title .win-ctrl {
    right: 21px;
}

.win-title .ctrl {
    background: linear-gradient(#ebe9f1, #d5d0de 50%, #b2aac4 50%, #8b80a8);
}

.win-body {
    flex: 1;
    min-height: 0;
    display: flex;
}

.win-left {
    flex: 1;
    min-width: 0;
    display: flex;
    flex-direction: column;
    background-color: #fff;
}

/* tabs */
.tabs {
    height: 64px;
    flex: none;
    display: flex;
    align-items: flex-end;
    padding: 0 4px 2px 17px;
    background: linear-gradient(#f1f0ef 62px, #fff 62px);
}

.tab-list {
    width: 2254px;
    margin-bottom: -2px;
    overflow: hidden;
    flex: none;
    display: flex;
    align-items: flex-end;
    gap: 3px;
    margin-right: 7px;
}

.tab {
    height: 44px;
    flex: none;
    padding: 4px 0 0;
    display: flex;
    justify-content: center;
    align-items: center;
    font-size: 23.4px;
    word-spacing: -2px;
    font-weight: bold;
    color: #f4f2f8;
    border-radius: 8px 8px 0 0;
    background: linear-gradient(#56437f, #3c2c70);
}

.tab:nth-child(1) { width: 135px; }
.tab:nth-child(2) { width: 277px; }
.tab:nth-child(3) { width: 179px; }
.tab:nth-child(4) { width: 138px; }
.tab:nth-child(5) { width: 205px; }
.tab:nth-child(6) { width: 255px; }
.tab:nth-child(7) { width: 215px; }
.tab:nth-child(8) { width: 248px; }
.tab:nth-child(9) { width: 156px; }
.tab:nth-child(10) { width: 175px; }
.tab:nth-child(11) { width: 185px; }

.tab.active {
    height: 54px;
    color: #222;
    padding-top: 10px;
    background: #fff;
}

.tab.last {
    width: 120px;
    justify-content: flex-start;
    padding-left: 20px;
}

.tab-nav {
    width: 48px;
    height: 46px;
    display: flex;
    justify-content: center;
    align-items: center;
    border-radius: 2px;
    background: linear-gradient(#4a4a4a, #111);
}

.tab-nav.off {
    background: linear-gradient(#cdcdcd, #b0b0b0);
}

.nav-ic {
    width: 32px;
    height: 32px;
}

/* pane */
.pane {
    flex: 1;
    min-height: 0;
    overflow: hidden;
    padding-left: 30px;
    padding-top: 20px;
}

.section-head {
    margin: 0 40px 0 3px;
    padding: 0 0 4px 2px;
    font-size: 23.2px;
    line-height: 31px;
    color: #222;
    border-bottom: 2px solid #e6e6e6;
}

.section-head.second {
    margin-top: 35px;
}

.grid-row {
    display: flex;
    margin-top: 35px;
}

.section-head.second + .grid-row {
    margin-top: 34px;
}

.grid {
    width: 2258px;
    flex: none;
    display: flex;
    flex-direction: column;
    overflow: hidden;
    border: 2px solid #e0e0e0;
    background-color: #fff;
}

.grid.big {
    height: 505px;
}

.grid.small {
    height: 300px;
    border-bottom: none;
}

.grid-head,
.grid-line {
    display: flex;
    flex: none;
}

.grid-head {
    height: 49px;
    font-size: 23px;
    font-weight: bold;
    color: #222;
}

.grid-line {
    height: 49px;
    font-size: 21.3px;
    color: #222;
    border-bottom: 2px solid #e0e0e0;
}

.cell {
    width: 352px;
    flex: none;
    padding: 2px 8px 0 7px;
    display: flex;
    align-items: center;
    overflow: hidden;
    white-space: nowrap;
    border-right: 2px solid #e0e0e0;
}

.grid-head .cell {
    justify-content: center;
    padding-top: 3px;
    background: linear-gradient(#fafafa, #dedede);
}

.grid-head .cell.cut {
    justify-content: flex-start;
    padding-left: 92px;
}

.grid.small .cell {
    width: 150px;
    padding: 1px 0 0;
}

.cell.num {
    justify-content: flex-end;
}

.grid-empty {
    flex: 1;
}

.hscroll {
    height: 27px;
    flex: none;
    display: flex;
    align-items: center;
    padding: 0 6px;
    background-color: #e4e3ea;
}

.hthumb {
    width: 1407px;
    height: 23px;
    margin-left: 11px;
    border-radius: 6px;
    background: linear-gradient(#54427f, #2f1e64);
}

.arrow-l,
.arrow-r {
    width: 0;
    height: 0;
    border-top: 10px solid transparent;
    border-bottom: 10px solid transparent;
}

.arrow-l {
    border-right: 11px solid #33206a;
}

.arrow-r {
    margin-left: auto;
    border-left: 11px solid #33206a;
}

.grid-tools {
    display: flex;
    flex-direction: column;
    gap: 20px;
    margin-left: 21px;
    padding-top: 58px;
}

.grid-tools .group {
    margin-top: 26px;
}

/* actions */
.actions {
    width: 2258px;
    height: 40px;
    margin-top: 22px;
    padding-left: 7px;
    display: flex;
    align-items: center;
    gap: 23px;
    font-size: 23.6px;
    font-weight: bold;
    color: #222;
}

.action {
    display: flex;
    align-items: center;
    gap: 20px;
}

.action.off {
    color: #aaa;
}

.count {
    margin-left: auto;
    font-size: 22.3px;
}

/* vertical scrollbar */
.vscroll {
    width: 29px;
    flex: none;
    display: flex;
    flex-direction: column;
    background-color: #f1f0ef;
}

.v-end {
    height: 30px;
    flex: none;
    display: flex;
    justify-content: center;
    align-items: center;
}

.vtrack {
    flex: 1;
    padding: 0 3px 0 1px;
    background-color: #e4e3ea;
}

.vthumb {
    display: block;
    height: 622px;
    border-radius: 6px;
    background: linear-gradient(90deg, #54427f, #2f1e64);
}

.arrow-u,
.arrow-d {
    width: 0;
    height: 0;
    border-left: 10px solid transparent;
    border-right: 10px solid transparent;
}

.arrow-u {
    border-bottom: 11px solid #33206a;
}

.arrow-d {
    border-top: 11px solid #33206a;
}

/* bottom of window */
.win-foot {
    height: 100px;
    flex: none;
    display: flex;
    justify-content: center;
    align-items: center;
    gap: 40px;
    padding: 1px 3px 0 0;
    border-top: 3px solid #dddddd;
    border-bottom: 4px solid #cccccc;
    background-color: #e8e7e5;
}

.btn {
    width: 280px;
    height: 52px;
    display: flex;
    border: 1px solid #333;
    border-radius: 4px;
    overflow: hidden;
    font: bold 24px "Liberation Sans", sans-serif;
    color: #fff;
    background: linear-gradient(#777, #3c3c3c 50%, #2a2a2a 50%, #111);
}

.btn-ic {
    width: 50px;
    height: 100%;
    flex: none;
    display: flex;
    justify-content: center;
    align-items: center;
}

.btn-ic.ok {
    background: linear-gradient(#9b90b3, #807498 50%, #3f2f72 50%, #2a185c);
}

.btn-ic.no {
    background: linear-gradient(#e89a9a, #d86a6a 50%, #c83030 50%, #b80000);
}

.btn-svg {
    width: 32px;
    height: 36px;
}

.btn-label {
    flex: 1;
    align-self: center;
}

.taskbar {
    height: 72px;
    flex: none;
    margin-right: -15px;
    margin-left: -129px;
    display: flex;
    justify-content: center;
    padding: 10px 0 0 108px;
    background: linear-gradient(#fafafa 84%, #e6e6e6);
}

.task {
    width: 300px;
    height: 48px;
    border: 2px solid #333;
    border-radius: 4px;
    font: bold 20.6px "Liberation Sans", sans-serif;
    color: #f4f2f8;
    background: linear-gradient(#a89db9, #968aad 45%, #6c5d8c 45%, #655685);
}

/* status bar */
.status {
    height: 54px;
    flex: none;
    display: flex;
    justify-content: flex-end;
    align-items: center;
    padding-right: 245px;
    font-size: 21.3px;
    color: #444;
    background: linear-gradient(#fff, #f6f6f6);
}

.st {
    height: 38px;
    padding: 0 13px 0 16px;
    display: flex;
    align-items: center;
    border-right: 2px solid #e6e6e6;
}

.st-ic {
    gap: 16px;
    padding: 0 15px;
}

.st-info {
    width: 33px;
    height: 32px;
}

.st-win {
    width: 30px;
    height: 32px;
}
```
